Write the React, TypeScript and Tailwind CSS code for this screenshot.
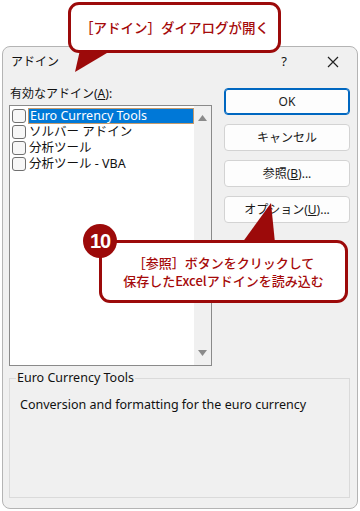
import React from "react";

const font = "font-['Noto_Sans','Noto_Sans_CJK_JP',sans-serif]";

type Addin = { name: string; selected?: boolean };

const addins: Addin[] = [
  { name: "Euro Currency Tools", selected: true },
  { name: "ソルバー アドイン" },
  { name: "分析ツール" },
  { name: "分析ツール - VBA" },
];

function DialogButton({
  children,
  primary,
}: {
  children: React.ReactNode;
  primary?: boolean;
}) {
  return (
    <div
      className={
        "h-[27px] w-[126px] rounded-[4px] flex items-center justify-center text-[12px] text-[#1a1a1a] bg-[#fdfdfd] " +
        (primary ? "border border-[#0067c0] shadow-[inset_0_0_0_1px_#0067c0]" : "border border-[#d3d3d3]")
      }
    >
      {children}
    </div>
  );
}

function AddinRow({ item }: { item: Addin }) {
  return (
    <div className="h-[16px] flex items-center">
      <div className="w-[14px] h-[14px] ml-[2px] rounded-[3px] border border-[#707070] bg-[#f7f7f7] shrink-0" />
      <div
        className={
          "ml-[2px] h-[16px] flex items-center pl-[1px] text-[12.5px] leading-none " +
          (item.selected
            ? "flex-1 bg-[#0078d7] text-white border border-[#c49a6c]"
            : "text-[#111]")
        }
      >
        {item.name}
      </div>
    </div>
  );
}

export default function App() {
  return (
    <div className={"relative w-[360px] h-[511px] bg-white overflow-hidden " + font}>
      {/* dialog */}
      <div className="mt-[46px] ml-[2px] w-[356px] h-[463px] rounded-[8px] border border-[#b4b4b4] bg-[#f0f0f0] flex flex-col">
        {/* title bar */}
        <div className="h-[29px] flex items-center pl-[8px] text-[12px] text-[#111]">
          <span className="flex-1">アドイン</span>
          <span className="w-[20px] text-center text-[13px] mr-[32px]">?</span>
          <svg width="14" height="14" viewBox="0 0 14 14" className="mr-[17px]">
            <path d="M2 2 L12 12 M12 2 L2 12" stroke="#222" strokeWidth="1.2" />
          </svg>
        </div>

        <div className="flex pl-[6px] pt-[10px]">
          {/* left column */}
          <div className="w-[203px] flex flex-col">
            <div className="h-[16px] flex items-center pl-[1px] text-[12px] text-[#111]">
              有効なアドイン(<span className="underline">A</span>):
            </div>
            <div className="mt-[3px] h-[261px] border border-[#8a8a8a] bg-white flex">
              <div className="flex-1 pt-[2px] flex flex-col">
                {addins.map((a) => (
                  <AddinRow key={a.name} item={a} />
                ))}
              </div>
              <div className="w-[17px] bg-[#f0f0f0] flex flex-col items-center justify-between py-[9px]">
                <svg width="9" height="6" viewBox="0 0 9 6">
                  <path d="M0 6 L4.5 0 L9 6 Z" fill="#8a8a8a" />
                </svg>
                <svg width="9" height="6" viewBox="0 0 9 6">
                  <path d="M0 0 L9 0 L4.5 6 Z" fill="#8a8a8a" />
                </svg>
              </div>
            </div>
          </div>

          {/* right column */}
          <div className="ml-[12px] pt-[2px] flex flex-col gap-[9px]">
            <DialogButton primary>OK</DialogButton>
            <DialogButton>キャンセル</DialogButton>
            <DialogButton>
              参照(<span className="underline">B</span>)...
            </DialogButton>
            <DialogButton>
              オプション(<span className="underline">U</span>)...
            </DialogButton>
          </div>
        </div>

        {/* description group */}
        <div className="mt-[12px] ml-[6px] w-[341px] h-[120px] border border-[#dadada] relative">
          <div className="absolute -top-[9px] left-[6px] px-[1px] bg-[#f0f0f0] text-[12.5px] text-[#111] leading-[16px]">
            Euro Currency Tools
          </div>
          <div className="pt-[17px] pl-[10px] text-[12.5px] text-[#111]">
            Conversion and formatting for the euro currency
          </div>
        </div>
      </div>

      {/* callout tails */}
      <svg className="absolute left-0 top-0" width="360" height="511" viewBox="0 0 360 511">
        <path d="M80 50 L75 72 L112 50 Z" fill="#9c0a0a" />
        <path d="M242 243 L271 203 L275 243 Z" fill="#9c0a0a" />
      </svg>

      {/* callout 1 */}
      <div className="absolute left-[68px] top-[2px] w-[213px] h-[51px] rounded-[11px] border-[3px] border-[#9c0a0a] bg-white flex items-center justify-center text-[13.5px] font-medium text-[#a50a0a] font-['Noto_Sans_CJK_JP',sans-serif]">
        ［アドイン］ダイアログが開く
      </div>

      {/* callout 2 */}
      <div className="absolute left-[99px] top-[240px] w-[249px] h-[63px] rounded-[11px] border-[3px] border-[#9c0a0a] bg-white flex flex-col items-center justify-center text-[13px] leading-[18px] font-medium text-[#a50a0a] font-['Noto_Sans_CJK_JP',sans-serif]">
        <div>［参照］ボタンをクリックして</div>
        <div>保存したExcelアドインを読み込む</div>
      </div>
      <div className="absolute left-[83px] top-[224px] w-[34px] h-[34px] rounded-full bg-[#9c0a0a] flex items-center justify-center text-white text-[20px] font-bold font-['Liberation_Sans',sans-serif] tracking-[-1px]">
        10
      </div>
    </div>
  );
}
